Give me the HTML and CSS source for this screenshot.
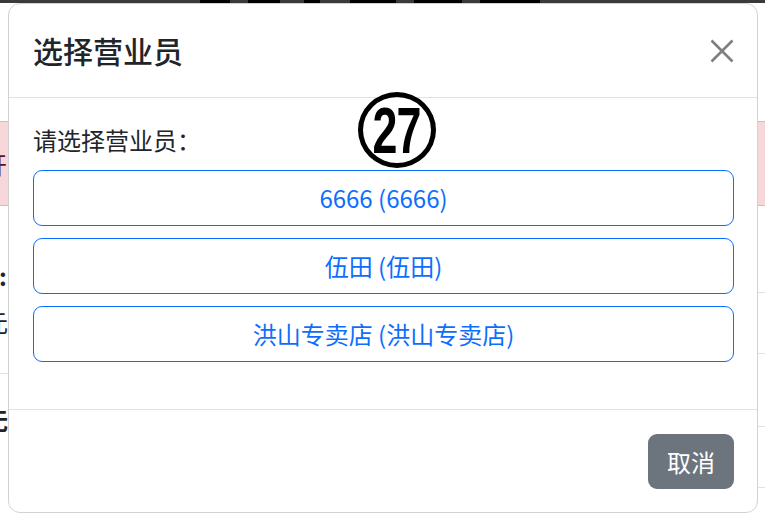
FILE: index.html
```html
<!DOCTYPE html>
<html lang="zh-CN">
<head>
<meta charset="utf-8">
<title>选择营业员</title>
<link rel="stylesheet" href="styles.css">
</head>
<body>
<div class="page">
  <div class="topbar"><div class="topbar-ink"></div></div>
  <div class="alert"><span class="alert-text">开</span></div>
  <div class="rows">
    <div class="col-left">
      <div class="frag frag-colon">:</div>
      <div class="frag frag-yuan">元</div>
      <div class="frag-rule"></div>
      <div class="frag frag-bold">无</div>
    </div>
    <div class="col-right">
      <div class="rline rline-1"></div>
      <div class="rline rline-2"></div>
      <div class="rline rline-3"></div>
      <div class="rline rline-4"></div>
    </div>
  </div>
</div>

<div class="modal">
  <div class="modal-header">
    <h5 class="modal-title">选择营业员</h5>
    <button class="btn-close" type="button" aria-label="Close">
      <svg viewBox="0 0 24 24" width="24" height="24"><path d="M1.5 1.5 L22.5 22.5 M22.5 1.5 L1.5 22.5" stroke="#7f7f7f" stroke-width="2.6" fill="none"/></svg>
    </button>
  </div>
  <div class="modal-body">
    <p class="prompt">请选择营业员：</p>
    <div class="choice-list">
      <button class="btn-choice" type="button">6666 (6666)</button>
      <button class="btn-choice" type="button">伍田 (伍田)</button>
      <button class="btn-choice" type="button">洪山专卖店 (洪山专卖店)</button>
    </div>
  </div>
  <div class="modal-footer">
    <button class="btn-cancel" type="button">取消</button>
  </div>
</div>

<div class="marker"><span class="marker-num">27</span></div>
</body>
</html>
```

FILE: styles.css
```css
html, body {
  margin: 0;
  padding: 0;
  background: #ffffff;
}
body {
  width: 765px;
  height: 522px;
  overflow: hidden;
  position: relative;
  font-family: "Noto Sans", "Noto Sans CJK SC", sans-serif;
  color: #212529;
}

/* background page */
.page {
  display: flex;
  flex-direction: column;
}
.topbar {
  height: 3px;
  background: #3a3a3a;
  display: flex;
}
.topbar-ink {
  margin-left: 200px;
  width: 340px;
  height: 3px;
  background: linear-gradient(90deg,
    #000 0 30px, #3a3a3a 30px 48px, #000 48px 80px, #3a3a3a 80px 104px,
    #000 104px 120px, #3a3a3a 120px 150px, #000 150px 196px, #3a3a3a 196px 214px,
    #000 214px 262px, #3a3a3a 262px 280px, #000 280px 340px);
}
.alert {
  margin-top: 118px;
  height: 83px;
  background: #f8d7da;
  border-top: 1.5px solid #f1aeb5;
  border-bottom: 1.5px solid #f1aeb5;
  display: flex;
  align-items: center;
  overflow: hidden;
  font-family: "Noto Sans CJK SC", sans-serif;
}
.alert-text {
  margin-left: -17px;
  font-size: 24px;
  color: #58151c;
}
.rows {
  display: flex;
  justify-content: space-between;
}
.col-left, .col-right {
  width: 8px;
  overflow: hidden;
  display: flex;
  flex-direction: column;
}
.frag {
  font-family: "Noto Sans CJK SC", sans-serif;
  font-size: 24px;
  line-height: 36px;
  white-space: nowrap;
}
.frag-colon {
  margin-top: 52px;
  margin-left: -1px;
  font-weight: 700;
}
.frag-yuan {
  margin-top: 10px;
  margin-left: -16px;
}
.frag-rule {
  margin-top: 33px;
  border-top: 1.5px solid #dee2e6;
}
.frag-bold {
  margin-top: 28px;
  margin-left: -16px;
  font-weight: 700;
}
.rline {
  border-top: 1.5px solid #dee2e6;
}
.rline-1 { margin-top: 86px; }
.rline-2 { margin-top: 60px; }
.rline-3 { margin-top: 72px; }
.rline-4 { margin-top: 60px; }

/* modal */
.modal {
  position: absolute;
  top: 3px;
  left: 8px;
  width: 750px;
  box-sizing: border-box;
  background: #fff;
  border: 1.5px solid #d2d2d2;
  border-radius: 12px;
  display: flex;
  flex-direction: column;
}
.modal-header {
  display: flex;
  align-items: center;
  justify-content: space-between;
  padding: 24px 23px 24px 24px;
  border-bottom: 1.5px solid #dee2e6;
}
.modal-title {
  margin: 0;
  font-family: "Noto Sans CJK SC", sans-serif;
  font-size: 30px;
  line-height: 45px;
  font-weight: 500;
  color: #212529;
}
.btn-close {
  width: 24px;
  height: 24px;
  padding: 0;
  border: 0;
  background: transparent;
  display: flex;
}
.modal-body {
  padding: 24px 23px 35px 24px;
}
.prompt {
  margin: 0 0 12px 0;
  font-family: "Noto Sans CJK SC", sans-serif;
  font-size: 24px;
  line-height: 36px;
  color: #212529;
}
.choice-list {
  display: flex;
  flex-direction: column;
  gap: 12px;
  padding-bottom: 12px;
}
.btn-choice {
  height: 56px;
  box-sizing: border-box;
  border: 1.5px solid #0d6efd;
  border-radius: 9px;
  background: #fff;
  color: #0d6efd;
  font-family: "Noto Sans CJK SC", sans-serif;
  font-size: 24px;
  line-height: 36px;
  padding: 8px 18px 8px;
}
.modal-footer {
  display: flex;
  justify-content: flex-end;
  padding: 24px 23px 23px 24px;
  border-top: 1.5px solid #dee2e6;
}
.btn-cancel {
  height: 55px;
  width: 86px;
  box-sizing: border-box;
  border: 0;
  border-radius: 9px;
  background: #6c757d;
  color: #fff;
  font-family: "Noto Sans CJK SC", sans-serif;
  font-size: 24px;
  line-height: 36px;
  padding: 0;
}

/* annotation marker */
.marker {
  position: absolute;
  left: 358px;
  top: 92px;
  width: 78px;
  height: 76px;
  box-sizing: border-box;
  border: 5px solid #000;
  border-radius: 50%;
  background: transparent;
  display: flex;
  align-items: center;
  justify-content: center;
}
.marker-num {
  font-family: "Liberation Sans", sans-serif;
  font-weight: 700;
  font-size: 64px;
  line-height: 1;
  color: #000;
  transform: scaleX(0.7);
  letter-spacing: -1px;
  margin-top: 2px;
}
```
